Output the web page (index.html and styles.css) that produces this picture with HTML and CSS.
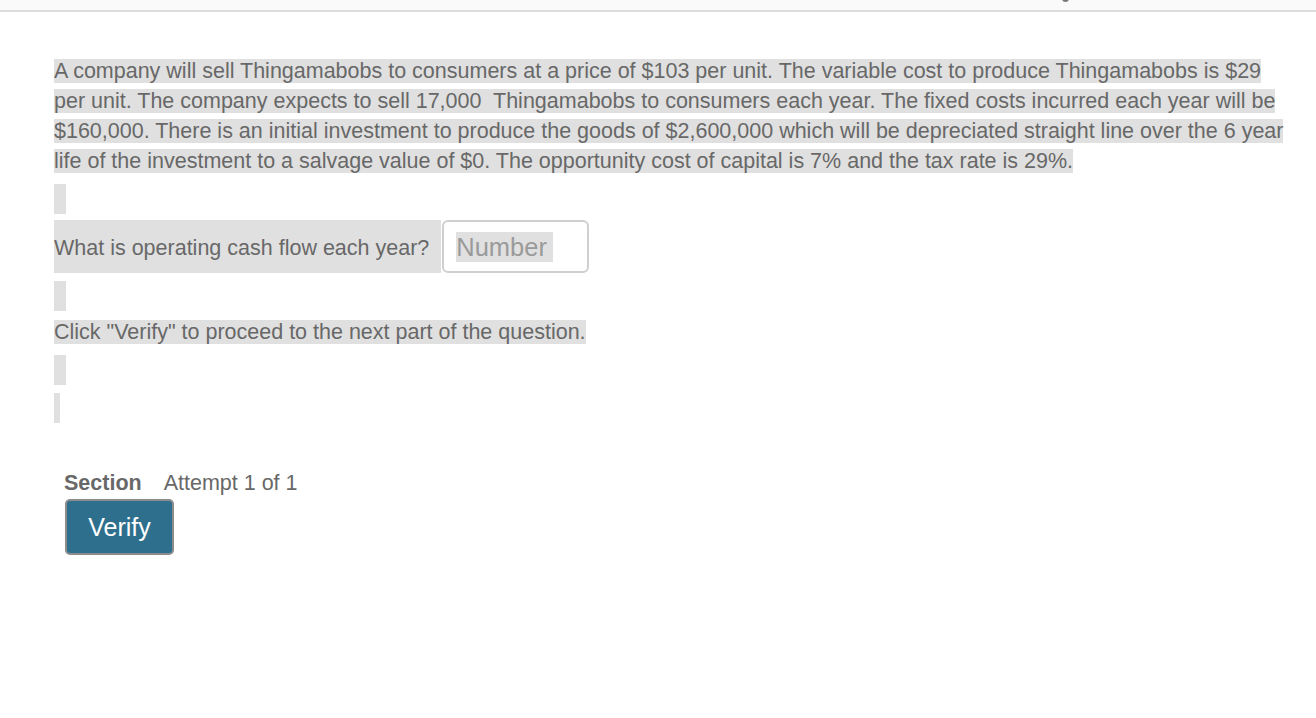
FILE: index.html
```html
<!DOCTYPE html>
<html>
<head>
<meta charset="utf-8">
<link rel="stylesheet" href="styles.css">
</head>
<body>
<div class="topbar"><span class="topicon"></span></div>
<main class="question">
  <p class="stem"><span class="hl">A company will sell Thingamabobs to consumers at a price of $103 per unit. The variable cost to produce Thingamabobs is $29 per unit. The company expects to sell 17,000&nbsp; Thingamabobs to consumers each year. The fixed costs incurred each year will be $160,000. There is an initial investment to produce the goods of $2,600,000 which will be depreciated straight line over the 6 year life of the investment to a salvage value of $0. The opportunity cost of capital is 7% and the tax rate is 29%.</span></p>
  <div class="spacer"><span class="blk"></span></div>
  <div class="ask">
    <span class="ask-label">What is operating cash flow each year?</span>
    <div class="field"><span class="placeholder">Number</span></div>
  </div>
  <div class="spacer"><span class="blk"></span></div>
  <p class="note"><span class="hl">Click "Verify" to proceed to the next part of the question.</span></p>
  <div class="spacer"><span class="blk"></span></div>
  <div class="spacer"><span class="blk thin"></span></div>
  <div class="footer">
    <div class="attempt"><strong>Section</strong><span>Attempt 1 of 1</span></div>
    <button class="verify" type="button">Verify</button>
  </div>
</main>
</body>
</html>
```
FILE: styles.css
```css
html, body {
  margin: 0;
  padding: 0;
  background: #ffffff;
}
body {
  font-family: "Liberation Sans", Arial, Helvetica, sans-serif;
  color: #686868;
  font-size: 21.5px;
}
.topbar {
  height: 10px;
  background: #fafafa;
  border-bottom: 2px solid #dcdcdc;
  position: relative;
}
.topicon {
  position: absolute;
  left: 1062px;
  top: -4px;
  width: 7px;
  height: 6px;
  border: 2px solid #777;
  border-top: none;
  border-radius: 0 0 5px 5px;
  box-sizing: border-box;
}
.question {
  padding-left: 54px;
  width: 1238px;
}
.stem {
  margin: 44px 0 0 0;
  line-height: 30px;
}
.hl {
  background: #e0e0e0;
}
.spacer {
  height: 30px;
  margin-top: 8px;
}
.blk {
  display: block;
  width: 12px;
  height: 30px;
  background: #e0e0e0;
}
.blk.thin {
  width: 6px;
}
.ask {
  display: flex;
  align-items: stretch;
  margin-top: 6px;
  height: 53px;
}
.ask-label {
  display: flex;
  align-items: center;
  background: #e0e0e0;
  padding-right: 12px;
  padding-top: 3px;
  box-sizing: border-box;
}
.field {
  width: 147px;
  height: 53px;
  box-sizing: border-box;
  border: 2px solid #cfcfcf;
  border-radius: 6px;
  margin-left: 1px;
  display: flex;
  align-items: center;
  padding-left: 12px;
  background: #fff;
}
.placeholder {
  background: #e0e0e0;
  color: #9a9a9a;
  font-size: 25.5px;
  line-height: 30px;
  padding-right: 6px;
}
.note {
  margin: 6px 0 0 0;
  line-height: 30px;
}
.footer {
  margin-top: 47px;
  padding-left: 10px;
  display: flex;
  flex-direction: column;
  align-items: flex-start;
  gap: 3px;
}
.attempt {
  display: flex;
  gap: 22px;
  line-height: 26px;
}
.attempt strong {
  font-weight: bold;
}
.verify {
  width: 109px;
  height: 56px;
  background: #2e6f8e;
  border: 2px solid #8c8c8c;
  border-radius: 5px;
  color: #ffffff;
  font-family: "Liberation Sans", Arial, Helvetica, sans-serif;
  font-size: 25px;
  padding: 0;
  margin-left: 1px;
}
```
